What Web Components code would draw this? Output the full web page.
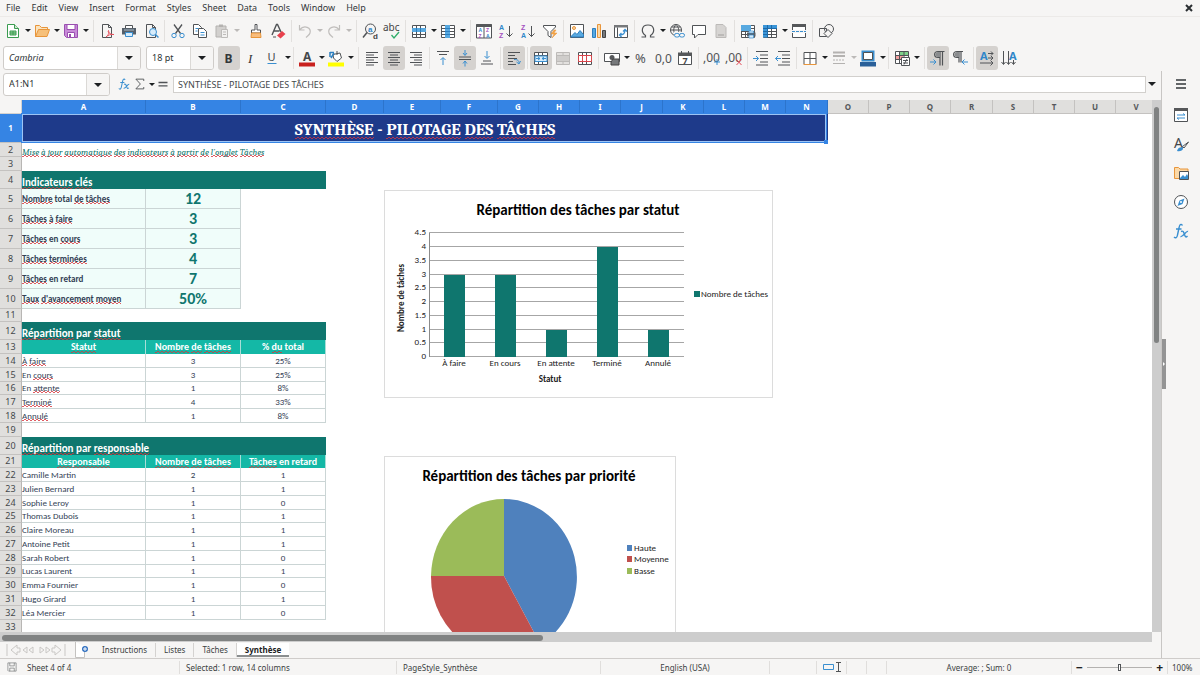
<!DOCTYPE html>
<html lang="fr">
<head>
<meta charset="utf-8">
<title>Synthèse</title>
<style>
  html, body { height: 100%; }
  body {
    margin: 0; background: #f6f5f4; color: #3b3f42;
    font: 9px/12px "Noto Sans", "Open Sans", sans-serif;
  }
</style>
</head>
<body>
<calc-app></calc-app>
<script>
/* Icon drawings, 16 x 16 grid. k = dark stroke, b = blue stroke, g = muted stroke */
const page = '<path class="k" d="M3.5 1.5h6l3 3v10h-9zM9.500 1.500v3h3"/>';
const grid = '<path class="k" fill="#fff" d="M1.500 2.500h13v12h-13zM1.500 5.500h13M1.500 8.500h13M1.500 11.500h13M5.500 2.500v12M9.500 2.500v12"/>';
const T = (x, y, s, t, c, extra = '') => `<text x="${x}" y="${y}" font-size="${s}" fill="${c}" ${extra}>${t}</text>`;
const SANS = 'font-family="Liberation Sans" font-weight="bold"';
const ICONS = {
  newdoc: '<path d="M2.500 1.500h7l4 4v9h-11z" fill="#fff" stroke="#3a9c50"/><path d="M9.500 1.500v4h4" fill="#cfe8d0" stroke="#3a9c50"/><path d="M5 8h6v4H5zM5 10h6M8 8v4" fill="#9bd3a0" stroke="#3a9c50"/>',
  open: '<path d="M1.500 13.500v-11h4l2 2h6v3" fill="#fbe3bd" stroke="#e8953a"/><path d="M1.500 13.500l3-7h11l-2.500 7z" fill="#f6c07a" stroke="#e8953a"/>',
  save: '<path d="M1.500 1.500h13v13h-11l-2-2z" fill="#c88ad8" stroke="#9a4fb0"/><path d="M4 1.500h8v5H4z" fill="#fff" stroke="#9a4fb0"/><path d="M4.500 9.500h7v5h-7z" fill="#fff" stroke="#9a4fb0"/><path d="M6 11h2v3H6z" fill="#9a4fb0"/>',
  pdf: page + '<path d="M7 14c3-2 3-5 2.500-6.500C8 9 12 12 15 11.500 12 11 9 12 7 14z" fill="#fff" stroke="#e5505c"/>',
  print: '<path d="M4.500 5V2.500h7V5" fill="#fff" class="k"/><path d="M1 5h14v6.500H1z" fill="#56606a"/><path d="M3 7h10" stroke="#a8bac8"/><path d="M4.500 9.500h7v4h-7z" fill="#d7ecfb" stroke="#3a8fd0"/>',
  preview: page + '<circle cx="10" cy="9" r="3.500" fill="#d7ecfb" stroke="#3a8fd0"/><path class="b" stroke-width="1.500" d="M12.500 11.500l3 3"/>',
  cut: '<path class="k" stroke-width="1.300" d="M4 1.500l6.500 9M12 1.500l-6.500 9"/><circle cx="4" cy="12.500" r="2.200" class="b"/><circle cx="12" cy="12.500" r="2.200" class="b"/>',
  copy: '<path class="k" fill="#fff" d="M1.500 1.500h5l3 3v7h-8z"/><path class="k" fill="#fff" d="M6.500 5.500h5l3 3v6h-8z"/><path class="b" d="M3.500 5.500h3M3.500 8h2M8.500 9.500h4M8.500 12h4"/>',
  paste: '<path d="M2 3h10v11H2z" fill="#d2d0ce" stroke="#b4b2b0"/><path d="M5 1.500h4V4H5z" fill="#b4b2b0"/><path d="M7.500 6.500h6v8h-6zM9 9h3M9 11.500h3" fill="#f2f1f0" stroke="#bdbbb9"/>',
  brush: '<path d="M7 1.500h2v5.500h3.500v3h-9V7H7z" fill="#fff" class="k"/><path d="M3.500 10h9l.5 4.500H3z" fill="#f8bd7d" stroke="#e8953a"/>',
  clear: '<path class="k" stroke-width="1.400" d="M2 12L6.500 1.500h1L11 9M4 8h5.500"/><path d="M7 12.500l5-4.500 3.500 3-5 4.500z" fill="#e8414d"/><path d="M3 14h3" class="k"/>',
  undo: '<path class="g" stroke-width="1.200" d="M2.500 2v5h5M2.500 7c5-6 12-2 10.500 3-.5 2-2.500 3-4 4.500"/>',
  redo: '<path class="g" stroke-width="1.200" d="M13.500 2v5h-5M13.500 7c-5-6-12-2-10.500 3 .5 2 2.500 3 4 4.500"/>',
  find: '<circle cx="8.500" cy="6" r="5" class="k"/><path class="k" stroke-width="1.500" d="M5 9.500l-4 5"/>' + T(6, 9, 8, 'a', '#2f86c9', SANS) + T(11, 15.500, 8, 'd', '#444', SANS),
  spell: T(-1, 8, 10, 'abc', '#444') + '<path d="M7.500 12l2.500 3 5-6" fill="none" stroke="#2fae6a" stroke-width="1.300"/>',
  rows: grid + '<path d="M1 5h14v4H1z" fill="#58a9e0"/><path d="M5.500 5v4M9.500 5v4" stroke="#2c7fc0"/>',
  cols: grid + '<path d="M5 2h5v13H5z" fill="#58a9e0"/><path d="M5 5.500h5M5 8.500h5M5 11.500h5" stroke="#2c7fc0"/>',
  autofilter: '<path class="k" fill="#fff" d="M.5 1.500h15v13.500H.5zM8 2v13"/><path d="M.5 1h15v3H.5z" fill="#56585a"/>' + T(2.500, 9, 5, 'A', '#2f86c9', SANS) + T(2.500, 14.500, 5, 'Z', '#a34fc0', SANS) + T(10, 9, 5, 'Z', '#a34fc0', SANS) + T(10, 14.500, 5, 'A', '#2f86c9', SANS),
  az: T(1, 7, 7, 'A', '#2f86c9', SANS) + T(1, 15, 7, 'Z', '#a34fc0', SANS) + '<path class="k" d="M11.500 3v10.500M8.500 10.500l3 3 3-3"/>',
  za: T(1, 7, 7, 'Z', '#a34fc0', SANS) + T(1, 15, 7, 'A', '#2f86c9', SANS) + '<path class="k" d="M11.500 3v10.500M8.500 10.500l3 3 3-3"/>',
  filter: '<path class="k" fill="#fff" d="M1.500 2.500h12v1.500L9 8.500v6l-3-2v-4L1.500 4z"/><path d="M12 7l-3 4h3l-2 4 5-5h-3l2-3z" fill="#f3a64a" stroke="#e8953a" stroke-width=".5"/>',
  image: '<path class="k" fill="#fff" d="M1.500 1.500h13v13h-13z"/><path d="M2 13.500l4-4 2 2 3-4 3.500 4v2.500H2z" fill="#58a9e0" stroke="#2c7fc0"/><circle cx="5" cy="5" r="1.500" fill="#fbd9a8" stroke="#e8953a"/>',
  chart: '<path d="M1.500 5.500h3v9h-3z" fill="#58a9e0" stroke="#2c7fc0"/><path d="M6.500 1.500h3v13h-3z" fill="#fbd9a8" stroke="#e8953a"/><path d="M11.500 7.500h3v7h-3z" fill="#77797b" stroke="#444"/>',
  pivot: '<path class="k" fill="#fff" d="M1.500 2.500h13v12h-13z"/><path d="M1 2h14v2.500H1z" fill="#77797b"/><path class="k" d="M4.500 4.500v10"/><path class="b" stroke-width="1.300" d="M7 12c4 0 5-2 5-5M10 8.500l2-2 2 2M8.500 10l-2 2 2 2"/>',
  omega: '<path class="k" stroke-width="1.200" d="M1.500 14h4v-1.500C.5 9 1.500 2 8 2s7.500 7 2.500 10.500V14h4"/>',
  link: '<circle cx="7" cy="7" r="5.500" class="k"/><path class="k" d="M1.500 7h11M7 1.500c-3 3-3 8 0 11M7 1.500c3 3 3 6 2.500 8M2.500 4h9"/><path d="M5 9h11v6H5z" fill="#f6f5f4"/><rect x="5.500" y="10.500" width="5" height="3.500" rx="1.700" class="b"/><rect x="10.500" y="10.500" width="5" height="3.500" rx="1.700" class="b"/>',
  comment: '<path class="k" fill="#fff" d="M1.500 2.500h13v9H7l-3.500 3.500v-3.500h-2z"/>',
  header: '<path d="M3 1.500h7l3 3v10H3z" fill="#d6d4d2" stroke="#bcbab8"/><path d="M5 11h6v2H5z" fill="#bcbab8"/>',
  printarea: grid + '<path d="M1 2h10v6H1z" fill="#58a9e0"/><path d="M7 9.500h8.500v4H7z" fill="#56606a"/><path d="M9 8h4.500v2H9zM9 12h4.500v3H9z" fill="#d7ecfb" stroke="#3a8fd0" stroke-width=".7"/>',
  freeze: grid + '<path d="M1 2h14v3.500H1zM1 2h4.500v12.500H1z" fill="#3a95d8"/><path d="M5.500 2v12.500M1 5.500h14M9.500 2v3M1 8.500h4M1 11.500h4" stroke="#1f6aa8"/>',
  split: '<path class="k" fill="#fff" d="M1.500 1.500h13v13h-13z"/><path d="M1 1h14v3H1z" fill="#56585a"/><path d="M0 8.500h16" stroke="#f6f5f4" stroke-width="3"/><path d="M1 8.500h14" stroke="#3a8fd0" stroke-dasharray="3 1"/>',
  shapes: '<path class="k" fill="#f6f5f4" d="M1.500 5.500h7v8h-7z"/><circle cx="11" cy="6" r="4.500" class="k"/><path class="k" fill="#f6f5f4" d="M10 6.500l4 4-4 4-4-4z"/>',
  bold: T(3.500, 12.500, 12, 'B', '#33373a', 'font-weight="bold"'),
  italic: T(5, 12.500, 13, 'I', '#33373a', 'font-style="italic" font-family="Liberation Serif"'),
  underline: T(2.500, 11, 11, 'U', '#44484b') + '<path class="b" d="M2.500 13.500h9"/>',
  fontcolor: T(4, 10.500, 12, 'A', '#44484b', 'font-weight="bold"') + '<path d="M0 12.500h16v4H0z" fill="#c9211e"/>',
  fillcolor: '<path class="k" fill="#fff" d="M5 4.500l7-1.500 1.500 5-4.500 3.500L5.500 8zM9 1v4"/><path d="M2 2.500h4M2 2v5M6 3L3 8" stroke="#2c7fc0" stroke-width="1.500"/><path d="M0 12.500h16v4H0z" fill="#ffff00"/>',
  left: '<path class="k" d="M2 2.500h12M2 5h8M2 7.500h12M2 10h8M2 12.500h12M2 15h8"/>',
  center: '<path class="k" d="M2 2.500h12M4 5h8M2 7.500h12M4 10h8M2 12.500h12M4 15h8"/>',
  right: '<path class="k" d="M2 2.500h12M6 5h8M2 7.500h12M6 10h8M2 12.500h12M6 15h8"/>',
  top: '<path class="k" d="M2 1.500h12M4 4.500h8"/><path class="b" d="M8 15V8M5.500 10L8 7.500l2.500 2.500"/>',
  middle: '<path class="k" d="M2 7h12M2 9.500h12"/><path class="b" d="M8 0v5M6 3l2 2.500L10 3M8 16.500v-5M6 13.500l2-2.500 2 2.500"/>',
  bottom: '<path class="k" d="M2 14h12M4 11h8"/><path class="b" d="M8 1v7M5.500 6L8 8.500 10.500 6"/>',
  wrap: '<path class="k" d="M2 2.500h12M2 5.500h7M2 8.500h9M2 11.500h5M2 14.500h8"/><path class="b" d="M8 9.500c4 0 5 1 5 4M10.500 12l2.500 2 1.500-3"/>',
  merge: grid + '<path d="M2 6h12v5.500H2z" fill="#d7ecfb" stroke="#3a8fd0"/><path class="b" d="M3 8.500h4M9 8.500h4M5 7l2 1.500L5 10M11 7L9 8.500l2 1.500"/>',
  mergeoff: '<path d="M1.500 2.500h13v12h-13zM1.500 5.500h13M1.500 11.500h13M8 2.500v3M8 11.500v3" fill="#e3e1df" stroke="#bcbab8"/><path d="M2 6h12v5H2z" fill="#cfcdcb"/>',
  unmerge: grid + '<path d="M1.500 5.500h13v6h-13zM5.500 5.500v6M9.500 5.500v6" fill="#fff" stroke="#d8444b"/>',
  currency: '<path class="k" fill="#fff" d="M.5 3.500h15v8H.5z"/><circle cx="8" cy="7.500" r="2.500" fill="#56585a"/><path d="M9 9h6v6H7v-3z" fill="#77797b" stroke="#444"/>',
  percent: T(2, 13, 13, '%', '#505356'),
  number: T(0, 13, 12, '0,0', '#505356'),
  date: '<path class="k" fill="#fff" d="M1.500 3.500h13v11h-13z"/><path d="M1 2.500h14V6H1z" fill="#56585a"/><path class="k" d="M4.500 1v3M11.500 1v3"/>' + T(5.500, 14, 9, '7', '#444', 'font-weight="bold"'),
  decadd: T(-1, 12, 12, ',00', '#505356') + '<path class="b" d="M13 9v6M10 12h6"/>',
  decdel: T(-1, 12, 12, ',00', '#505356') + '<path d="M10.500 9.500l5 5.500M15.500 9.500L10.500 15" fill="none" stroke="#e5505c"/>',
  indent: '<path class="k" d="M3 1.500h12M7 5h8M7 8.500h8M7 12h8M3 15h12"/><path class="b" d="M0 8.500h5.500M3 6l2.500 2.500L3 11"/>',
  outdent: '<path class="k" d="M3 1.500h12M7 5h8M7 8.500h8M7 12h8M3 15h12"/><path class="b" d="M6 8.500H.5M3 6L.5 8.500 3 11"/>',
  borders: '<path class="k" fill="#fff" d="M2 14V2.500h12V14M8 2.500V14M2 8.500h12"/><path d="M1.500 14.500h13" stroke="#e8953a"/>',
  bstyle: '<path d="M2 2.500h12M2 6h12" stroke="#b4b2b0" stroke-width="2"/><path d="M2 10h12" stroke="#b4b2b0" stroke-dasharray="2 1"/><path d="M2 13.500h12" stroke="#b4b2b0"/>',
  bcolor: '<path d="M2.500 1.500h11v9h-11z" fill="#fff" stroke="#3a8fd0" stroke-width="2"/><path d="M3.500 2.500h9v7h-9z" class="k"/><path d="M0 12h16v4.500H0z" fill="#2a6099"/>',
  cond: '<path class="k" fill="#fff" d="M1.500 1.500h13v12h-13z"/><path d="M5 2h9v3.500H5z" fill="#7fd18a"/><path d="M2 5.500h7v4H2z" fill="#f3a0a0"/><path class="k" d="M1.500 5.500h13M1.500 9.500h13M5.500 1.500v12M10 1.500v12"/><path class="k" fill="#fff" d="M7.500 7.500h8v8h-8zM9 10.500h5M9 13h5M13 9l-3 5.500"/>',
  ltr: '<path class="k" stroke-width="1.200" d="M14.500 1.500H8c-4.500 0-4.500 6 0 6h2M10 1.500v14M12.500 1.500v14"/><path d="M8 2c-3.500 0-3.500 5 0 5h2V2z" fill="#8a8c8e"/><path class="b" d="M0 12h6M3.500 9.500L6 12l-2.500 2.500"/>',
  rtl: '<path class="k" stroke-width="1.200" d="M11 1.500H5c-4.500 0-4.500 6 0 6h2M7 1.500v11M9 1.500v11"/><path d="M5 2c-3.500 0-3.500 5 0 5h2V2z" fill="#8a8c8e"/><path class="b" d="M16 12h-6M12.500 9.500L10 12l2.500 2.500"/>',
  texth: T(1, 9.500, 11, 'A', '#2f86c9', 'font-weight="bold"') + '<path class="k" d="M9 3.500h5M12 1.500l2 2-2 2M9 8h5M12 6l2 2-2 2M1 13h13M11.500 10.500L14 13l-2.500 2.500"/>',
  textv: T(8, 9.500, 11, 'A', '#2f86c9', 'font-weight="bold"') + '<path class="k" d="M2.500 1v13M.5 12l2 2.500 2-2.500M7.500 1v13M5.500 12l2 2.500 2-2.500M12.500 10v4M10.500 12l2 2.500 2-2.500"/>',
  fx: '<path d="M9.500 2.500C7.500 0 6.500 2 6 5L4.500 12C4 15 2.500 15.500 1 14M3 6h5.500" fill="none" stroke="#3a8fd0" stroke-width="1.400"/><path d="M8 8.500c2-1 2.500 0 3.500 3s1.500 3 3 1.500M15 8.500c-2-1-5 6-7.500 5" fill="none" stroke="#3a8fd0" stroke-width="1.400"/>',
  sigma: '<path class="k" stroke-width="1.200" d="M13 4V1.500H2.500L8.500 8 2.500 14.500H13V12"/>',
  equals: '<path d="M2 6h12M2 10.500h12" stroke="#505356" stroke-width="1.700"/>',
  burger: '<path d="M3 4h10M3 8h10M3 12h10" stroke="#33373a" stroke-width="1.500"/>',
  props: '<path class="k" fill="#fff" d="M1.500 1.500h13v13h-13z"/><path d="M1 1h14v3H1z" fill="#56585a"/><path class="b" d="M4 8h8l-2-1.500M12 11H4l2 1.500"/>',
  styles: T(1, 12, 14, 'A', '#44484b') + '<path class="k" fill="#fff" d="M15.500 6l-4.500 6-1.500-1.500z"/><path d="M4 15c1-4 4-4 5.500-3.500C11 13 9 16 4 15z" fill="#3a8fd0"/>',
  gallery: '<path d="M1.500 13.500v-11h4l1.500 1.500h8v9.500z" fill="#fbd9a8" stroke="#e8953a"/><path class="k" fill="#fff" d="M6.500 6.500h9v8h-9z"/><path d="M7 13l3-3 2 2 2-3 1 2v3H7z" fill="#3a8fd0"/>',
  compass: '<circle cx="8" cy="8" r="6.500" fill="#fff" class="k"/><path d="M11.500 4.500L9.500 10l-5 2 2-5.500z" fill="#3a8fd0"/><circle cx="8" cy="8" r="1" fill="#fff"/>',
  disk: '<path class="k" opacity=".7" d="M2.500 2.500h11v11h-10l-1-1zM5 2.500v4h6v-4M5 13.500v-4h6v4"/>',
  addsheet: '<path d="M1.500 0v15.500h9V4" fill="#fff" stroke="#c4c2c0"/><circle cx="11" cy="7" r="3" fill="#2f6fc0"/><path d="M11 5v4M9 7h4" stroke="#fff"/>',
  close: '<path d="M5 5l6 6M11 5l-6 6" stroke="#2b2f32" stroke-width="2"/>'
};
const define = (name, html, setup) => {
  const tpl = document.createElement('template');
  tpl.innerHTML = html;
  customElements.define(name, class extends HTMLElement {
    connectedCallback() {
      if (this.shadowRoot) return;
      this.attachShadow({ mode: 'open' }).append(tpl.content.cloneNode(true));
      if (setup) setup(this, this.shadowRoot);
    }
  });
};

define('ui-icon', `<style>
  :host { display: block; width: 16px; height: 16px; flex: none; }
  svg { display: block; width: 100%; height: 100%; overflow: visible; }
  .k { stroke: #505356; } .b { stroke: #3a8fd0; } .g { stroke: #c0bebc; }
  .k:not([fill]), .b:not([fill]), .g:not([fill]) { fill: none; }
</style><div></div>`, (el, root) => {
  root.querySelector('div').innerHTML = `<svg viewBox="0 0 16 16" aria-hidden="true">${ICONS[el.getAttribute('name')]}</svg>`;
});

define('drop-arrow', `<style>
  :host { display: block; width: 7px; height: 22px; }
  button { all: unset; display: grid; place-items: center; width: 100%; height: 100%; }
  i { border: 3px solid transparent; border-top-color: #1d2022; border-bottom: 0; }
  :host([large]) i { border-width: 4px; border-bottom: 0; }
  :host([muted]) i { border-top-color: #bcbab8; }
</style><button aria-label="More"><i></i></button>`);

define('tool-button', `<style>
  :host { display: flex; align-items: center; }
  button { all: unset; display: grid; place-items: center; width: 22px; height: 24px; border-radius: 3px; }
  :host([pressed]) button { background: #d5d2cf; }
  :host([small]) button { width: 16px; height: 16px; }
</style><button></button>`, (el, root) => {
  const n = el.getAttribute('name');
  const b = root.querySelector('button');
  b.setAttribute('aria-label', n);
  b.innerHTML = `<ui-icon name="${n}"></ui-icon>`;
  if (el.hasAttribute('menu')) b.insertAdjacentHTML('afterend', `<drop-arrow ${el.getAttribute('menu')}></drop-arrow>`);
});

define('tool-bar', `<style>
  :host { display: flex; align-items: center; box-sizing: border-box; padding-left: 2px; overflow: hidden; }
  ::slotted(hr) { width: 1px; height: 22px; margin: 0 2px; border: 0; background: #e2e0de; flex: none; }
  ::slotted(hr.wide) { margin-left: 4px; }
  ::slotted(hr.blank) { background: none; }
</style><slot></slot>`);

define('combo-box', `<style>
  :host { display: flex; box-sizing: border-box; height: 24px; border: 1px solid #cfccc9; border-radius: 3px; background: #fff; overflow: hidden; flex: none; }
  input { all: unset; flex: 1; min-width: 0; padding-left: 5px; font-style: inherit; color: #2e3436; }
  drop-arrow { width: 22px; background: #f6f5f4; border-left: 1px solid #dbd9d6; }
</style><input><drop-arrow large></drop-arrow>`, (el, root) => {
  const i = root.querySelector('input');
  i.value = el.getAttribute('value');
  i.setAttribute('aria-label', el.getAttribute('label'));
});

define('menu-bar', `<style>
  :host { display: flex; align-items: center; height: 17px; border-bottom: 1px solid #eceae8; box-sizing: border-box; }
  nav { padding-left: 1px; }
  button { all: unset; padding: 0 5px; margin-right: 1px; color: #33373a; }
  tool-button { margin-left: auto; margin-right: 3px; }
</style><nav></nav><tool-button small name="close"></tool-button>`, (el, root) => {
  root.querySelector('nav').innerHTML = 'File Edit View Insert Format Styles Sheet Data Tools Window Help'
    .split(' ').map(t => `<button>${t}</button>`).join('');
});

define('formula-bar', `<style>
  :host { display: flex; align-items: center; height: 29px; box-sizing: border-box; padding: 0 6px 3px 3px; }
  combo-box { width: 107px; height: 23px; margin-right: 6px; }
  .line { flex: 1; min-width: 0; box-sizing: border-box; height: 17px; border: 1px solid #d2d0cd; background: #fff; padding: 0 4px; margin: 0 2px; font: inherit; font-size: 9px; color: #44484b; outline: 0; }
  ui-icon { width: 12px; height: 12px; margin: 0 2px; }
</style>
<combo-box value="A1:N1" label="Name box"></combo-box>
<ui-icon name="fx"></ui-icon><ui-icon name="sigma"></ui-icon><drop-arrow></drop-arrow><ui-icon name="equals"></ui-icon>
<input class="line" aria-label="Formula" value="SYNTHÈSE - PILOTAGE DES TÂCHES"><drop-arrow large></drop-arrow>`);

/* Column widths and row heights of the sheet, in pixels */
const COLS = [124, 95, 85, 58, 57, 57, 41, 41, 41, 42, 41, 41, 41, 42, 41, 41, 41, 42, 41, 41, 41, 41];
const ROWS = [29, 14, 14, 18, 20, 20, 20, 20, 20, 20, 13, 18, 14, 14, 14, 13, 14, 14, 14, 18, 13, 14, 14, 14, 13, 14, 14, 14, 13, 14, 14, 14, 14];
/* Words between underscores carry the spell-check mark */
const people = ['Camille Martin|2|1', 'Julien Bernard|1|1', 'Sophie Leroy|1|0', 'Thomas Dubois|1|1', 'Claire Moreau|1|1', 'Antoine Petit|1|1', 'Sarah Robert|1|0', 'Lucas Laurent|1|1', 'Emma Fournier|1|0', 'Hugo Girard|1|1', 'Léa Mercier|1|0'];
const CELLS = {
  1: ['title', '_SYNTHÈSE_ - _PILOTAGE_ _DES_ _TÂCHES_'],
  2: ['note', '_Mise_ _à_ _jour_ _automatique_ _des_ _indicateurs_ _à_ _partir_ _de_ _l’onglet_ _Tâches_'],
  4: ['section', '_Indicateurs_ _clés_'],
  5: ['kpi', '_Nombre_ total _de_ _tâches_|12'], 6: ['kpi', '_Tâches_ _à_ _faire_|3'], 7: ['kpi', '_Tâches_ en _cours_|3'],
  8: ['kpi', '_Tâches_ _terminées_|4'], 9: ['kpi', '_Tâches_ en retard|7'], 10: ['kpi', "_Taux_ _d'avancement_ _moyen_|50%"],
  12: ['section', '_Répartition_ par _statut_'],
  13: ['head', '_Statut_|_Nombre_ _de_ _tâches_|% _du_ total'],
  14: ['row', '_À_ _faire_|3|25%'], 15: ['row', 'En _cours_|3|25%'], 16: ['row', 'En _attente_|1|8%'], 17: ['row', '_Terminé_|4|33%'], 18: ['row', '_Annulé_|1|8%'],
  20: ['section', '_Répartition_ par _responsable_'],
  21: ['head', '_Responsable_|_Nombre_ _de_ _tâches_|_Tâches_ en retard']
};
people.forEach((p, i) => CELLS[22 + i] = ['row', p]);

define('sheet-grid', `<style>
  :host { display: block; position: relative; overflow: hidden; background: #fff; flex: 1; min-width: 0; }
  table { border-collapse: separate; border-spacing: 0; table-layout: fixed; width: 0; font: 9px/10px Carlito, Lato, sans-serif; color: #334155; }
  th, td { padding: 0; box-sizing: border-box; white-space: nowrap; overflow: hidden; }
  thead th { height: 14px; background: #e0dfdd; color: #55585b; border-right: 1px solid #c4c2c0; border-bottom: 1px solid #c4c2c0; font: bold 8px/12px "Noto Sans", sans-serif; }
  thead th.sel { background: #3584e4; color: #fff; border-color: #2c74cc; }
  thead th.corner { background: #f6f5f4; border-color: #d4d2d0; }
  tbody th { background: #e0dfdd; color: #44484b; border-right: 1px solid #b8b6b4; border-bottom: 1px solid #c4c2c0; font: 9px/12px "Noto Sans", sans-serif; }
  tbody th.sel { background: #3584e4; color: #fff; font-weight: bold; font-size: 8px; }
  /* spell-check zigzag: a low and a high dash that alternate */
  u { text-decoration: none; background:
      linear-gradient(90deg, #d8343ccc 50%, transparent 50%) 0 100% / 4px 1px repeat-x,
      linear-gradient(90deg, transparent 50%, #d8343ccc 50%) 0 calc(100% - 1px) / 4px 1px repeat-x; }
  .title td:nth-child(2) { background: #1e3a8a; color: #fff; text-align: center; padding-top: 2px; font: bold 17px/20px Caladea, "Noto Serif", "Liberation Serif", serif; }
  .note td:nth-child(2) { font: italic 9px/9px Caladea, "Noto Serif", "Liberation Serif", serif; color: #0f766e; vertical-align: bottom; }
  .section td:nth-child(2) { background: #0f766e; color: #fff; font-weight: bold; font-size: 11px; line-height: 13px; vertical-align: bottom; }
  .kpi td:nth-child(2), .kpi td:nth-child(3) { background: #f0fdfa; border-right: 1px solid #cbd5d5; border-bottom: 1px solid #cbd5d5; font-weight: bold; }
  .kpi td:nth-child(3) { color: #0f766e; text-align: center; font-size: 16px; line-height: 18px; }
  .head td:nth-child(-n+4) { background: #14b8a6; color: #fff; font-weight: bold; text-align: center; border-right: 1px solid #a8ded7; font-size: 10px; }
  .row td:nth-child(-n+4) { border-right: 1px solid #cbd5d5; border-bottom: 1px solid #cbd5d5; text-align: center; }
  .row td:nth-child(2) { text-align: left; }
  .range { position: absolute; left: 21px; top: 13px; width: 806px; height: 30px; box-sizing: border-box; border: 1px solid #3584e4; outline: 1px solid #9cc4f5; outline-offset: -2px; pointer-events: none; }
  .range::after { content: ""; position: absolute; right: -2px; bottom: -2px; width: 4px; height: 4px; background: #3584e4; }
  bar-chart { position: absolute; left: 384px; top: 90px; }
  pie-chart { position: absolute; left: 384px; top: 356px; }
</style>
<table><colgroup></colgroup><thead></thead><tbody></tbody></table>
<div class="range"></div><bar-chart></bar-chart><pie-chart></pie-chart>`, (el, root) => {
  const $ = s => root.querySelector(s);
  $('colgroup').innerHTML = [22, ...COLS].map(w => `<col style="width:${w}px">`).join('');
  $('table').style.width = COLS.reduce((a, b) => a + b, 22) + 'px';
  $('thead').innerHTML = '<tr><th class="corner"></th>' + COLS.map((w, i) =>
    `<th class="${i < 14 ? 'sel' : ''}">${String.fromCharCode(65 + i)}</th>`).join('') + '</tr>';
  const mark = s => s.replace(/_([^_]+)_/g, '<u>$1</u>');
  $('tbody').innerHTML = ROWS.map((h, i) => {
    const [kind, text] = CELLS[i + 1] || ['', ''];
    const span = { title: 14, section: 3, note: 3 }[kind] || 1;
    const cells = text.split('|').map(t => `<td${span > 1 ? ` colspan="${span}"` : ''}>${mark(t)}</td>`);
    let out = cells.join('');
    for (let c = cells.length * span; c < COLS.length; c++) out += '<td></td>';
    return `<tr class="${kind}" style="height:${h}px"><th class="${i ? '' : 'sel'}">${i + 1}</th>${out}</tr>`;
  }).join('');
});

const CHART_CSS = `
  :host { display: block; box-sizing: border-box; background: #fff; border: 1px solid #dcdcdc; }
  svg { display: block; overflow: visible; font: 9px Carlito, Lato, sans-serif; fill: #222; }
  .title { font-size: 15px; font-weight: bold; fill: #000; }
  .b { font-weight: bold; }
  .m { text-anchor: middle; } .e { text-anchor: end; }`;

define('bar-chart', `<style>${CHART_CSS} :host { width: 389px; height: 208px; }</style><div></div>`, (el, root) => {
  const data = [['À faire', 3], ['En cours', 3], ['En attente', 1], ['Terminé', 4], ['Annulé', 1]];
  const y = v => Math.round(166 - v * 27.5);
  let s = '<text class="title m" x="193" y="24">Répartition des tâches par statut</text>';
  for (let v = 0; v <= 4.5; v += .5)
    s += `<path d="M44 ${y(v) - .5}H299" stroke="#a6a6a6"/><text class="e" x="41" y="${y(v) + 2}">${v}</text>`;
  s += '<path d="M44.500 42V166" stroke="#8a8a8a"/>';
  data.forEach(([n, v], i) => {
    const x = 60 + i * 51;
    s += `<rect x="${x - 1}" y="${y(v)}" width="21" height="${166 - y(v)}" fill="#0f766e"/><text class="m" x="${x + 9}" y="175">${n}</text>`;
  });
  s += '<text class="b m" x="165" y="191">Statut</text><text class="b m" transform="translate(19 107) rotate(-90)">Nombre de tâches</text>';
  s += '<rect x="309" y="100" width="6" height="6" fill="#0f766e"/><text x="316" y="106">Nombre de tâches</text>';
  root.querySelector('div').innerHTML = `<svg width="387" height="206">${s}</svg>`;
});

define('pie-chart', `<style>${CHART_CSS} :host { width: 292px; height: 216px; }</style>
<svg width="290" height="214">
  <text class="title m" x="144" y="24">Répartition des tâches par priorité</text>
  <path d="M119 119V42A73 78 0 0 1 155.500 187.500Z" fill="#4f81bd"/>
  <path d="M119 119L155.500 187.500A73 78 0 0 1 46 119Z" fill="#c0504d"/>
  <path d="M119 119H46A73 78 0 0 1 119 42Z" fill="#9bbb59"/>
  <rect x="242" y="88" width="5" height="6" fill="#4f81bd"/><text x="249" y="94">Haute</text>
  <rect x="242" y="99" width="5" height="6" fill="#c0504d"/><text x="249" y="105">Moyenne</text>
  <rect x="242" y="111" width="5" height="6" fill="#9bbb59"/><text x="249" y="117">Basse</text>
</svg>`);

define('sheet-tabs', `<style>
  :host { display: flex; align-items: center; height: 16px; box-sizing: border-box; font-size: 8px; padding: 0 0 1px 5px; }
  svg { width: 62px; height: 14px; fill: none; stroke: #c9c7c5; margin-right: 7px; }
  ui-icon { margin-right: 4px; }
  button { all: unset; box-sizing: border-box; height: 14px; line-height: 13px; padding: 0 8px; border-right: 1px solid #d4d2d0; }
  button[aria-selected=true] { background: #fff; font-weight: bold; color: #222; border-right: 0; border-bottom: 2px solid #8b8e8f; }
</style>
<svg viewBox="0 0 62 14" aria-hidden="true"><path d="M2 1v12M12 2L6 7l6 5v-3h3V5h-3zM22 4l-4 3 4 3zM28 4l-4 3 4 3zM35 4l4 3-4 3zM41 4l4 3-4 3zM50 2l6 5-6 5V9h-3V5h3zM60 1v12"/></svg>
<ui-icon name="addsheet"></ui-icon>
<button>Instructions</button><button>Listes</button><button>Tâches</button><button aria-selected="true">Synthèse</button>`);

define('side-deck', `<style>
  :host { display: flex; flex-direction: column; align-items: center; gap: 13px; width: 39px; padding-top: 5px; border-left: 1px solid #c8c6c4; position: relative; flex: none; box-sizing: border-box; }
  .grip { position: absolute; left: 0; top: 268px; width: 4px; height: 50px; background: #949494; display: grid; place-items: center; }
  .grip::after { content: ""; border: 2px solid transparent; border-left-color: #fff; border-right: 0; }
  tool-button:first-of-type { margin-bottom: 2px; }
</style>
<tool-button small name="burger"></tool-button><tool-button small name="props"></tool-button><tool-button small name="styles"></tool-button>
<tool-button small name="gallery"></tool-button><tool-button small name="compass"></tool-button><tool-button small name="fx"></tool-button><div class="grip"></div>`);

define('status-bar', `<style>
  :host { display: grid; grid-template-columns: 180fr 217fr 204fr 169fr 47fr 30fr 20fr 20fr 185fr 96fr 32fr; align-items: center; height: 17px; box-sizing: border-box; border-top: 1px solid #cfccca; font-size: 8px; }
  span { box-sizing: border-box; height: 13px; min-width: 0; line-height: 13px; border-right: 1px solid #e0dedc; padding-left: 6px; white-space: nowrap; display: flex; align-items: center; gap: 9px; }
  .c { justify-content: center; padding: 0; }
  .z { gap: 4px; padding: 0 4px; }
  .last { border: 0; padding-left: 4px; }
  ui-icon { width: 12px; height: 12px; }
  input { appearance: none; background: none; flex: 1; min-width: 0; height: 9px; margin: 0; }
  input::-webkit-slider-runnable-track { height: 7px; background: linear-gradient(#b4b2b0, #b4b2b0) center / 100% 1px no-repeat; }
  input::-webkit-slider-thumb { appearance: none; width: 3px; height: 7px; box-sizing: border-box; border: 1px solid #505356; background: #fff; }
  button { all: unset; font-weight: bold; font-size: 12px; color: #222; }
</style>
<span><ui-icon name="disk"></ui-icon>Sheet 4 of 4</span>
<span>Selected: 1 row, 14 columns</span>
<span>PageStyle_Synthèse</span>
<span class="c">English (USA)</span>
<span></span>
<span class="c"><svg width="20" height="12" fill="none" aria-hidden="true"><path d="M1.500 3.500h10v5h-10z" stroke="#3a8fd0"/><path d="M14 1.500h5M14 10.500h5M16.500 1.500v9" stroke="#505356"/></svg></span>
<span></span><span></span>
<span class="c">Average: ; Sum: 0</span>
<span class="z"><button aria-label="Zoom out">−</button><input type="range" aria-label="Zoom"><button aria-label="Zoom in">+</button></span>
<span class="last">100%</span>`);

define('calc-app', `<style>
  :host { display: flex; flex-direction: column; height: 100vh; overflow: hidden; }
  .std, .fmt { height: 27px; }
  .font { width: 138px; margin: 0 5px 0 1px; } .size { width: 68px; margin-right: 4px; }
  .body { flex: 1; display: flex; min-height: 0; }
  .work { flex: 1; min-width: 0; display: flex; flex-direction: column; }
  .view { flex: 1; display: flex; min-height: 0; }
  .v, .h { background: #cdcdcd; flex: none; }
  .v { width: 9px; padding: 7px 2px 0; box-sizing: border-box; }
  .v i { display: block; height: 45%; border-radius: 3px; background: #808282; }
  .h { height: 10px; padding: 3px 0 0 2px; box-sizing: border-box; margin-right: 9px; }
  .h i { display: block; width: 47%; height: 6px; border-radius: 3px; background: #808282; }
</style>
<menu-bar></menu-bar>
<tool-bar class="std"></tool-bar>
<tool-bar class="fmt"></tool-bar>
<div class="body">
  <div class="work"><formula-bar></formula-bar>
    <div class="view"><sheet-grid></sheet-grid><div class="v"><i></i></div></div>
    <div class="h"><i></i></div><sheet-tabs></sheet-tabs></div>
  <side-deck></side-deck>
</div>
<status-bar></status-bar>`, (el, root) => {
  /* "|" separator, "||" wider one, "~" blank gap; ":v" adds a menu arrow, ":m" a muted one, "!" is pressed */
  const build = s => s.split(' ').map(t =>
    t === '|' ? '<hr>' : t === '||' ? '<hr class="wide">' : t === '~' ? '<hr class="blank">'
      : `<tool-button name="${t.replace(/[:!].*/, '')}" ${/:v/.test(t) ? 'menu' : /:m/.test(t) ? 'menu="muted"' : ''} ${/!/.test(t) ? 'pressed' : ''}></tool-button>`).join('');
  root.querySelector('.std').innerHTML = build('newdoc:v open:v save:v || pdf print preview | cut copy paste:m ~ brush clear | undo:m redo:m || find spell | rows:v cols:v || autofilter az za filter | image chart pivot | omega:v link comment header | printarea freeze:v split | shapes');
  root.querySelector('.fmt').innerHTML = '<combo-box class="font" style="font-style:italic" value="Cambria" label="Font name"></combo-box><combo-box class="size" value="18 pt" label="Font size"></combo-box>'
    + build('bold! italic underline:v | fontcolor:v fillcolor:v || left center! right | top middle! bottom | wrap! | merge! mergeoff unmerge | currency:v percent number date | decadd decdel | indent outdent | borders:v bstyle:m bcolor:v | cond:v || ltr! rtl | texth! textv');
});
</script>
</body>
</html>
